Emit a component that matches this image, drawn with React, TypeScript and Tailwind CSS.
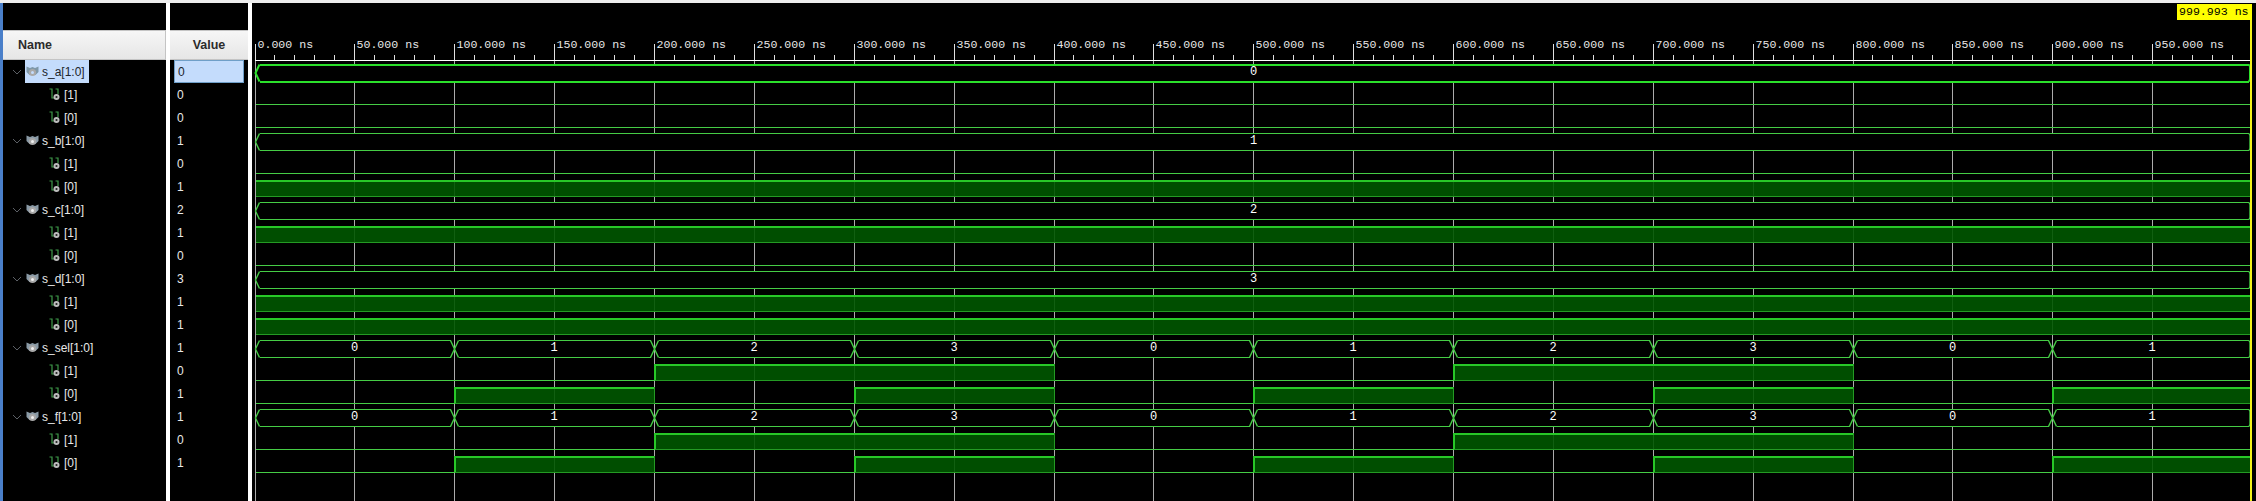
import React from 'react';

type Row = { name: string; value: string; bus: boolean; kind: string };

// one entry per row: bus rows get hex segments, bit rows get level runs
const ROW_H = 23;
const TOP = 60;
const END_X = 2250;
const nsToX = (ns: number) => Math.floor(255 + ns * 1.9975) + 0.5;

const sel = [0, 1, 2, 3, 0, 1, 2, 3, 0, 1];
const rows: Row[] = [
  { name: 's_a[1:0]', value: '0', bus: true, kind: 'a' },
  { name: '[1]', value: '0', bus: false, kind: 'lo' },
  { name: '[0]', value: '0', bus: false, kind: 'lo' },
  { name: 's_b[1:0]', value: '1', bus: true, kind: 'b' },
  { name: '[1]', value: '0', bus: false, kind: 'lo' },
  { name: '[0]', value: '1', bus: false, kind: 'hi' },
  { name: 's_c[1:0]', value: '2', bus: true, kind: 'c' },
  { name: '[1]', value: '1', bus: false, kind: 'hi' },
  { name: '[0]', value: '0', bus: false, kind: 'lo' },
  { name: 's_d[1:0]', value: '3', bus: true, kind: 'd' },
  { name: '[1]', value: '1', bus: false, kind: 'hi' },
  { name: '[0]', value: '1', bus: false, kind: 'hi' },
  { name: 's_sel[1:0]', value: '1', bus: true, kind: 'sel' },
  { name: '[1]', value: '0', bus: false, kind: 'bit1' },
  { name: '[0]', value: '1', bus: false, kind: 'bit0' },
  { name: 's_f[1:0]', value: '1', bus: true, kind: 'sel' },
  { name: '[1]', value: '0', bus: false, kind: 'bit1' },
  { name: '[0]', value: '1', bus: false, kind: 'bit0' },
];

function Chevron() {
  return (
    <svg width="10" height="6" viewBox="0 0 10 6" className="shrink-0">
      <path d="M1 1 L5 5 L9 1" fill="none" stroke="#5c6066" strokeWidth="1" />
    </svg>
  );
}

function BusIcon({ selected }: { selected: boolean }) {
  return (
    <svg width="13" height="13" viewBox="0 0 13 13" className="shrink-0">
      <path
        d="M0.5 1.5 L4 3 L6.5 2 L9 3 L12.5 1.5 L12.5 7 L9.5 10 L3.5 10 L0.5 7 Z"
        fill={selected ? '#7f98a8' : '#8a9aa6'}
      />
      <circle cx="6.5" cy="7.5" r="3.6" fill="#a9a9a9" />
      <circle cx="6.5" cy="7.5" r="1.5" fill={selected ? '#c4dcfc' : '#f0f0f0'} />
    </svg>
  );
}

function BitIcon() {
  return (
    <svg width="12" height="13" viewBox="0 0 12 13" className="shrink-0">
      <path d="M0.5 1 H3 V10 H5" fill="none" stroke="#3f9a4a" strokeWidth="1.2" />
      <path d="M6.5 1 H9 V6" fill="none" stroke="#3f9a4a" strokeWidth="1.2" />
      <circle cx="7.5" cy="9" r="3" fill="#bdbdbd" />
      <circle cx="7.5" cy="9" r="1.1" fill="#202020" />
    </svg>
  );
}

function NameRow({ row, selected }: { row: Row; selected: boolean }) {
  if (!row.bus) {
    return (
      <div className="h-[23px] flex items-center pl-[46px] gap-[3px] text-[#e8e8e8]">
        <BitIcon />
        <span>{row.name}</span>
      </div>
    );
  }
  return (
    <div className="h-[23px] flex items-center pl-[9px] text-[#e8e8e8]">
      <Chevron />
      <div className={`h-[23px] flex items-center gap-[3px] pl-[1px] pr-[4px] ml-[3px] ${selected ? 'bg-[#c4dcfc] text-[#20242a]' : ''}`}>
        <BusIcon selected={selected} />
        <span>{row.name}</span>
      </div>
    </div>
  );
}

function ValueRow({ row, selected }: { row: Row; selected: boolean }) {
  return (
    <div className="h-[23px] pl-[4px] pr-[4px]">
      <div
        className={`h-[23px] flex items-center pl-[3px] ${
          selected ? 'bg-[#c4dcfc] border border-[#6f9fc8] text-[#20242a]' : 'text-[#e8e8e8]'
        }`}
      >
        {row.value}
      </div>
    </div>
  );
}

function levelRuns(kind: string): [number, number][] {
  if (kind === 'hi') return [[0, 1000]];
  if (kind === 'bit1') return [[200, 400], [600, 800]];
  if (kind === 'bit0') return [[100, 200], [300, 400], [500, 600], [700, 800], [900, 1000]];
  return [];
}

function BitWave({ kind, y }: { kind: string; y: number }) {
  const hi = y + 5;
  const lo = y + 21;
  const runs = levelRuns(kind);
  const segs: React.ReactNode[] = [];
  let last = nsToX(0);
  runs.forEach(([a, b], i) => {
    const x1 = nsToX(a);
    const x2 = Math.min(nsToX(b), END_X);
    if (x1 > last) {
      segs.push(<line key={`l${i}`} x1={last} x2={x1} y1={lo + 0.5} y2={lo + 0.5} stroke="#45cc45" />);
    }
    segs.push(
      <g key={`h${i}`}>
        <rect x={x1} y={hi} width={x2 - x1} height={lo - hi} fill="#005600" fillOpacity="0.9" />
        <line x1={x1} x2={x2} y1={hi + 0.5} y2={hi + 0.5} stroke="#28c828" strokeWidth="2" />
        <line x1={x1} x2={x2} y1={lo + 0.5} y2={lo + 0.5} stroke="#249a24" />
        {a > 0 && <line x1={x1} x2={x1} y1={hi} y2={lo} stroke="#28c828" strokeWidth="2" />}
        {b < 1000 && <line x1={x2} x2={x2} y1={hi} y2={lo} stroke="#249a24" />}
      </g>
    );
    last = x2;
  });
  if (last < END_X) {
    segs.push(<line key="tail" x1={last} x2={END_X} y1={lo + 0.5} y2={lo + 0.5} stroke="#45cc45" />);
  }
  return <g shapeRendering="crispEdges">{segs}</g>;
}

function BusSeg({ from, to, label, y, thick }: { from: number; to: number; label: string; y: number; thick: boolean }) {
  const top = y + 4.5;
  const bot = y + 21.5;
  const mid = y + 13;
  const x1 = nsToX(from);
  const x2 = nsToX(to);
  const last = to >= 1000;
  const stroke = thick ? '#2be02b' : '#45cc45';
  const w = thick ? 2 : 1;
  const xl = x1 + 4;
  const xr = last ? END_X - 1 : x2 - 4;
  // the last segment is cut off at the cursor, so it gets a small notch and no point
  const rightEdge = last
    ? `M${xr} ${top} L${END_X} ${top + 2} L${END_X} ${bot - 2} L${xr} ${bot}`
    : `M${xr} ${top} L${x2} ${mid} L${xr} ${bot}`;
  const fill = last
    ? `M${x1} ${mid} L${xl} ${top} L${xr} ${top} L${END_X} ${top + 2} L${END_X} ${bot - 2} L${xr} ${bot} L${xl} ${bot} Z`
    : `M${x1} ${mid} L${xl} ${top} L${xr} ${top} L${x2} ${mid} L${xr} ${bot} L${xl} ${bot} Z`;
  return (
    <g>
      <path d={fill} fill="#000" />
      <g shapeRendering="crispEdges">
        <line x1={xl} x2={xr} y1={top} y2={top} stroke={stroke} strokeWidth={w} />
        <line x1={xl} x2={xr} y1={bot} y2={bot} stroke={stroke} strokeWidth={w} />
      </g>
      <path d={`M${xl} ${top} L${x1} ${mid} L${xl} ${bot}`} fill="none" stroke={stroke} strokeWidth={thick ? 2 : 1.4} />
      <path d={rightEdge} fill="none" stroke={stroke} strokeWidth={thick ? 2 : 1.4} />
      <text
        x={(x1 + x2) / 2 - 0.5}
        y={y + 15}
        textAnchor="middle"
        fill="#ffffff"
        className="font-['Liberation_Mono',monospace] text-[12px]"
      >
        {label}
      </text>
    </g>
  );
}

function BusWave({ kind, y, thick }: { kind: string; y: number; thick: boolean }) {
  if (kind === 'sel') {
    return (
      <g>
        {sel.map((v, i) => (
          <BusSeg key={i} from={i * 100} to={(i + 1) * 100} label={String(v)} y={y} thick={false} />
        ))}
      </g>
    );
  }
  const label = { a: '0', b: '1', c: '2', d: '3' }[kind] ?? '';
  return <BusSeg from={0} to={1000} label={label} y={y} thick={thick} />;
}

function WaveChart() {
  const majors = Array.from({ length: 20 }, (_, i) => i * 50);
  const minors = Array.from({ length: 100 }, (_, i) => i * 10).filter((n) => n % 50 !== 0);
  return (
    <svg width="2004" height="498" viewBox="252 3 2004 498" className="block">
      {/* levels sit over the grid at a slight transparency, bus hexes hide it */}
      {majors.map((ns) => (
        <line key={ns} x1={nsToX(ns)} x2={nsToX(ns)} y1={60} y2={501} stroke="#ababab" shapeRendering="crispEdges" />
      ))}
      {rows.map((r, i) =>
        r.bus ? null : <BitWave key={i} kind={r.kind} y={TOP + i * ROW_H} />
      )}
      {rows.map((r, i) =>
        r.bus ? <BusWave key={i} kind={r.kind} y={TOP + i * ROW_H} thick={i === 0} /> : null
      )}

      {/* ruler */}
      <line x1={255} x2={END_X + 1} y1={60.5} y2={60.5} stroke="#ffffff" shapeRendering="crispEdges" />
      {majors.map((ns) => {
        const x = nsToX(ns);
        return (
          <g key={ns}>
            <line x1={x} x2={x} y1={44} y2={60} stroke="#e0e0e0" shapeRendering="crispEdges" />
            <text x={x + 2} y={48} fill="#e6e6e6" className="font-['Liberation_Mono',monospace] text-[11.6px]">
              {`${ns}.000 ns`}
            </text>
          </g>
        );
      })}
      {minors.map((ns) => {
        const x = nsToX(ns);
        return <line key={ns} x1={x} x2={x} y1={55} y2={60} stroke="#e0e0e0" shapeRendering="crispEdges" />;
      })}

      {/* cursor */}
      <line x1={2251} x2={2251} y1={4} y2={501} stroke="#f2f21a" strokeWidth="2" shapeRendering="crispEdges" />
      <rect x={2177} y={4} width={75} height={16} fill="#ffff00" />
      <text x={2179} y={15} fill="#000" className="font-['Liberation_Mono',monospace] text-[11.6px]">
        999.993 ns
      </text>
    </svg>
  );
}

export default function App() {
  return (
    <div className="w-[2256px] h-[501px] overflow-hidden flex flex-col bg-black font-['Liberation_Sans',Arial,sans-serif] text-[12px]">
      <div className="h-[3px] bg-[#eeeeee] shrink-0" />
      <div className="flex-1 flex min-h-0">
        <div className="w-[3px] bg-[#4a7fc9] shrink-0" />
        {/* name column */}
        <div className="w-[163px] shrink-0 flex flex-col">
          <div className="h-[27px]" />
          <div className="h-[30px] flex items-center pl-[15px] font-bold text-[12.5px] text-[#2c2c2c] bg-gradient-to-b from-[#f6f6f6] to-[#e6e6e6] border-t border-b border-r border-[#c4c4c4]">
            Name
          </div>
          {rows.map((r, i) => (
            <NameRow key={i} row={r} selected={i === 0} />
          ))}
        </div>
        <div className="w-[4px] bg-white shrink-0" />
        {/* value column */}
        <div className="w-[78px] shrink-0 flex flex-col">
          <div className="h-[27px]" />
          <div className="h-[30px] flex items-center justify-center font-bold text-[12.5px] text-[#2c2c2c] bg-gradient-to-b from-[#f6f6f6] to-[#e6e6e6] border-t border-b border-[#c4c4c4]">
            Value
          </div>
          {rows.map((r, i) => (
            <ValueRow key={i} row={r} selected={i === 0} />
          ))}
        </div>
        <div className="w-[4px] bg-white shrink-0" />
        <div className="flex-1 min-w-0">
          <WaveChart />
        </div>
      </div>
    </div>
  );
}
